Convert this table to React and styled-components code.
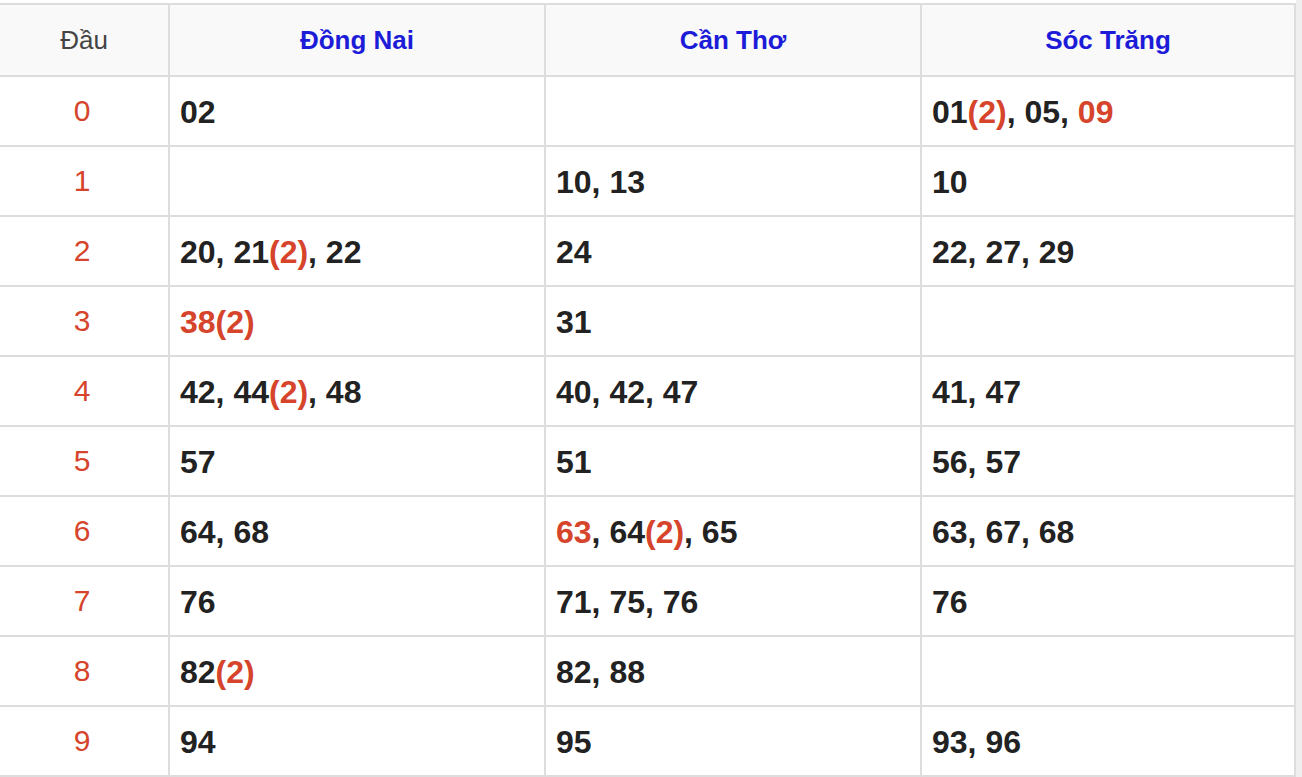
import React from "react";
import styled, { createGlobalStyle } from "styled-components";

const GlobalStyle = createGlobalStyle`
  html, body {
    margin: 0;
    padding: 0;
    background: #ffffff;
    font-family: "Liberation Sans", Arial, sans-serif;
  }
`;

const provinces = ["Đồng Nai", "Cần Thơ", "Sóc Trăng"];

// "!" = hot number (all red), "(n)" = number of hits
const rows = [
  [["02"], [], ["01(2)", "05", "!09"]],
  [[], ["10", "13"], ["10"]],
  [["20", "21(2)", "22"], ["24"], ["22", "27", "29"]],
  [["!38(2)"], ["31"], []],
  [["42", "44(2)", "48"], ["40", "42", "47"], ["41", "47"]],
  [["57"], ["51"], ["56", "57"]],
  [["64", "68"], ["!63", "64(2)", "65"], ["63", "67", "68"]],
  [["76"], ["71", "75", "76"], ["76"]],
  [["82(2)"], ["82", "88"], []],
  [["94"], ["95"], ["93", "96"]],
];

const parse = (raw) => {
  const hot = raw.startsWith("!");
  const m = raw.replace("!", "").match(/^(\d+)(\(\d+\))?$/);
  return { hot, num: m[1], count: m[2] || "" };
};

export default function App() {
  return (
    <>
      <GlobalStyle />
      <Page>
        <Sheet>
          <HeadCell>Đầu</HeadCell>
          {provinces.map((p) => (
            <HeadCell key={p} $province>
              {p}
            </HeadCell>
          ))}
          {rows.map((row, i) => (
            <React.Fragment key={i}>
              <HeadDigit>{i}</HeadDigit>
              {row.map((items, j) => (
                <Cell key={j}>
                  {items.map((raw, k) => {
                    const { hot, num, count } = parse(raw);
                    return (
                      <React.Fragment key={k}>
                        {k > 0 && ", "}
                        <Num $hot={hot}>{num}</Num>
                        {count && <Hit>{count}</Hit>}
                      </React.Fragment>
                    );
                  })}
                </Cell>
              ))}
            </React.Fragment>
          ))}
        </Sheet>
        <Track />
      </Page>
    </>
  );
}

const Page = styled.div`
  display: flex;
  align-items: flex-start;
  width: 1302px;
  height: 777px;
  overflow: hidden;
`;

const Sheet = styled.div`
  display: grid;
  grid-template-columns: 168px 374px 374px 372px;
  grid-template-rows: 70px repeat(10, 68px);
  gap: 2px;
  padding: 2px;
  margin: 3px 0 0 -2px;
  background: #dddddd;
`;

const Track = styled.div`
  align-self: stretch;
  width: 6px;
  background: #efefef;
`;

const HeadCell = styled.div`
  display: flex;
  align-items: center;
  justify-content: center;
  background: #f9f9f9;
  font-size: 26px;
  font-weight: ${(p) => (p.$province ? 700 : 400)};
  color: ${(p) => (p.$province ? "#1c1cd8" : "#444444")};
`;

const HeadDigit = styled.div`
  display: flex;
  align-items: center;
  justify-content: center;
  padding-right: 4px;
  background: #ffffff;
  font-size: 30px;
  color: #d5442b;
`;

const Cell = styled.div`
  display: flex;
  align-items: center;
  padding: 2px 10px 0;
  background: #ffffff;
  font-size: 32px;
  font-weight: 700;
  color: #222222;
  white-space: pre;
`;

const Num = styled.span`
  color: ${(p) => (p.$hot ? "#d5442b" : "inherit")};
`;

const Hit = styled.span`
  color: #d5442b;
`;
